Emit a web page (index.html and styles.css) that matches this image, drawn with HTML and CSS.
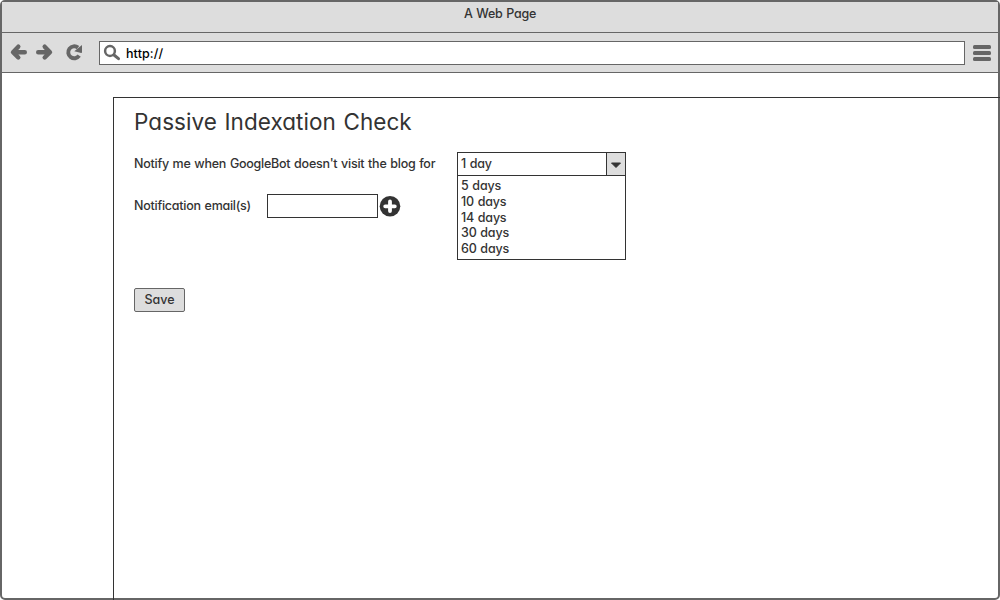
FILE: index.html
```html
<!DOCTYPE html>
<html lang="en">
<head>
<meta charset="utf-8">
<title>A Web Page</title>
<link rel="stylesheet" href="styles.css">
</head>
<body>
<div class="browser">
  <header class="titlebar"><span>A Web Page</span></header>
  <nav class="toolbar">
    <svg class="nav-icons" width="97" height="39" viewBox="0 0 97 39">
      <g fill="none" stroke="#666" stroke-width="4.400" stroke-linecap="round" stroke-linejoin="round">
        <path d="M16.300 13.700 11 19.200 16.300 24.500M12 19.200H22.800"/>
        <path d="M42.700 13.700 48 19.200 42.700 24.500M47 19.200H36.200"/>
      </g>
      <path fill="none" stroke="#666" stroke-width="3.900" d="M77.200 22.700A6 6 0 1 1 76 14.600"/>
      <path fill="#666" d="M80 12V19.200Q80 20 79.200 20L72.300 18.300Z"/>
    </svg>
    <div class="address">
      <svg width="26" height="22" viewBox="0 0 26 22"><g fill="none" stroke="#666"><circle cx="10" cy="9" r="4.900" stroke-width="2.500"/><path d="M14 13 18.500 16.700" stroke-width="3" stroke-linecap="round"/></g></svg>
      <span class="url">http://</span>
    </div>
    <svg class="menu" width="18" height="17" viewBox="0 0 18 17"><g fill="#666"><rect width="18" height="4" rx="1.500"/><rect y="6" width="18" height="4" rx="1.500"/><rect y="12" width="18" height="4" rx="1.500"/></g></svg>
  </nav>
  <main class="panel">
    <h1>Passive Indexation Check</h1>
    <div class="form">
      <div class="fields">
        <div class="row"><span>Notify me when GoogleBot doesn't visit the blog for</span></div>
        <div class="row email">
          <label>Notification email(s)</label>
          <div class="input"></div>
          <svg width="22" height="22" viewBox="0 0 22 22"><circle cx="11" cy="11.300" r="10.300" fill="#333"/><path d="M11 6.500V16.100M6.200 11.300H15.800" stroke="#fff" stroke-width="3.800" stroke-linecap="round"/></svg>
        </div>
      </div>
      <div class="select">
        <div class="current"><span>1 day</span><div class="arrow"><svg width="18" height="22" viewBox="0 0 18 22"><path d="M4.500 10H13.500L9 14.500Z" fill="#333" stroke="#333" stroke-linejoin="round"/></svg></div></div>
        <div class="options"><div>5 days</div><div>10 days</div><div>14 days</div><div>30 days</div><div>60 days</div></div>
      </div>
    </div>
    <div class="save"><span>Save</span></div>
  </main>
</div>
</body>
</html>
```
FILE: styles.css
```css
* { box-sizing: border-box; }
body {
  margin: 0;
  background: #fff;
  color: #333;
  font: 500 12.5px/16px Inter, "Liberation Sans", sans-serif;
  font-feature-settings: "cv11";
  letter-spacing: -0.25px;
  word-spacing: 0.7px;
  white-space: nowrap;
}
svg { display: block; flex: none; }
.browser {
  display: flex;
  flex-direction: column;
  width: 1000px;
  height: 600px;
  border: 2px solid #666;
  border-radius: 5px;
}
.titlebar {
  height: 31px;
  padding-top: 4px;
  background: #ddd;
  border-bottom: 1px solid #666;
  text-align: center;
}
.toolbar {
  display: flex;
  align-items: center;
  height: 40px;
  background: #ddd;
  border-bottom: 1px solid #666;
}
.address {
  display: flex;
  align-items: center;
  width: 866px;
  height: 24px;
  border: 1px solid #666;
  background: #fff;
  color: #000;
}
.url { padding-top: 2px; letter-spacing: 0.1px; }
.menu { margin: 2px 0 0 8px; }
.panel {
  flex: 1;
  margin: 24px -2px -2px 111px;
  padding: 10px 0 0 20px;
  border: solid #333;
  border-width: 1px 0 0 1px;
}
h1 {
  margin: 0;
  font-size: 22.5px;
  font-weight: 400;
  line-height: 28px;
  letter-spacing: 0.05px;
  word-spacing: 1.2px;
}
.form { display: flex; margin-top: 16px; height: 108px; }
.fields { width: 323px; }
.row { display: flex; align-items: center; height: 24px; }
.email { margin-top: 18px; }
.email label { width: 133px; }
.input { width: 111px; height: 24px; margin-right: 1px; border: 1px solid #333; }
.select { width: 169px; letter-spacing: -0.2px; }
.current {
  display: flex;
  align-items: center;
  justify-content: space-between;
  height: 24px;
  padding-left: 3px;
  border: 1px solid #333;
}
.arrow { background: #ddd; border-left: 1px solid #333; }
.options {
  height: 84px;
  padding: 2px 0 0 3px;
  border: solid #333;
  border-width: 0 1px 1px;
  line-height: 15.75px;
}
.save {
  display: flex;
  align-items: center;
  justify-content: center;
  width: 51px;
  height: 24px;
  margin-top: 28px;
  border: 1px solid #666;
  border-radius: 2px;
  background: #ddd;
  letter-spacing: 0;
}
```
